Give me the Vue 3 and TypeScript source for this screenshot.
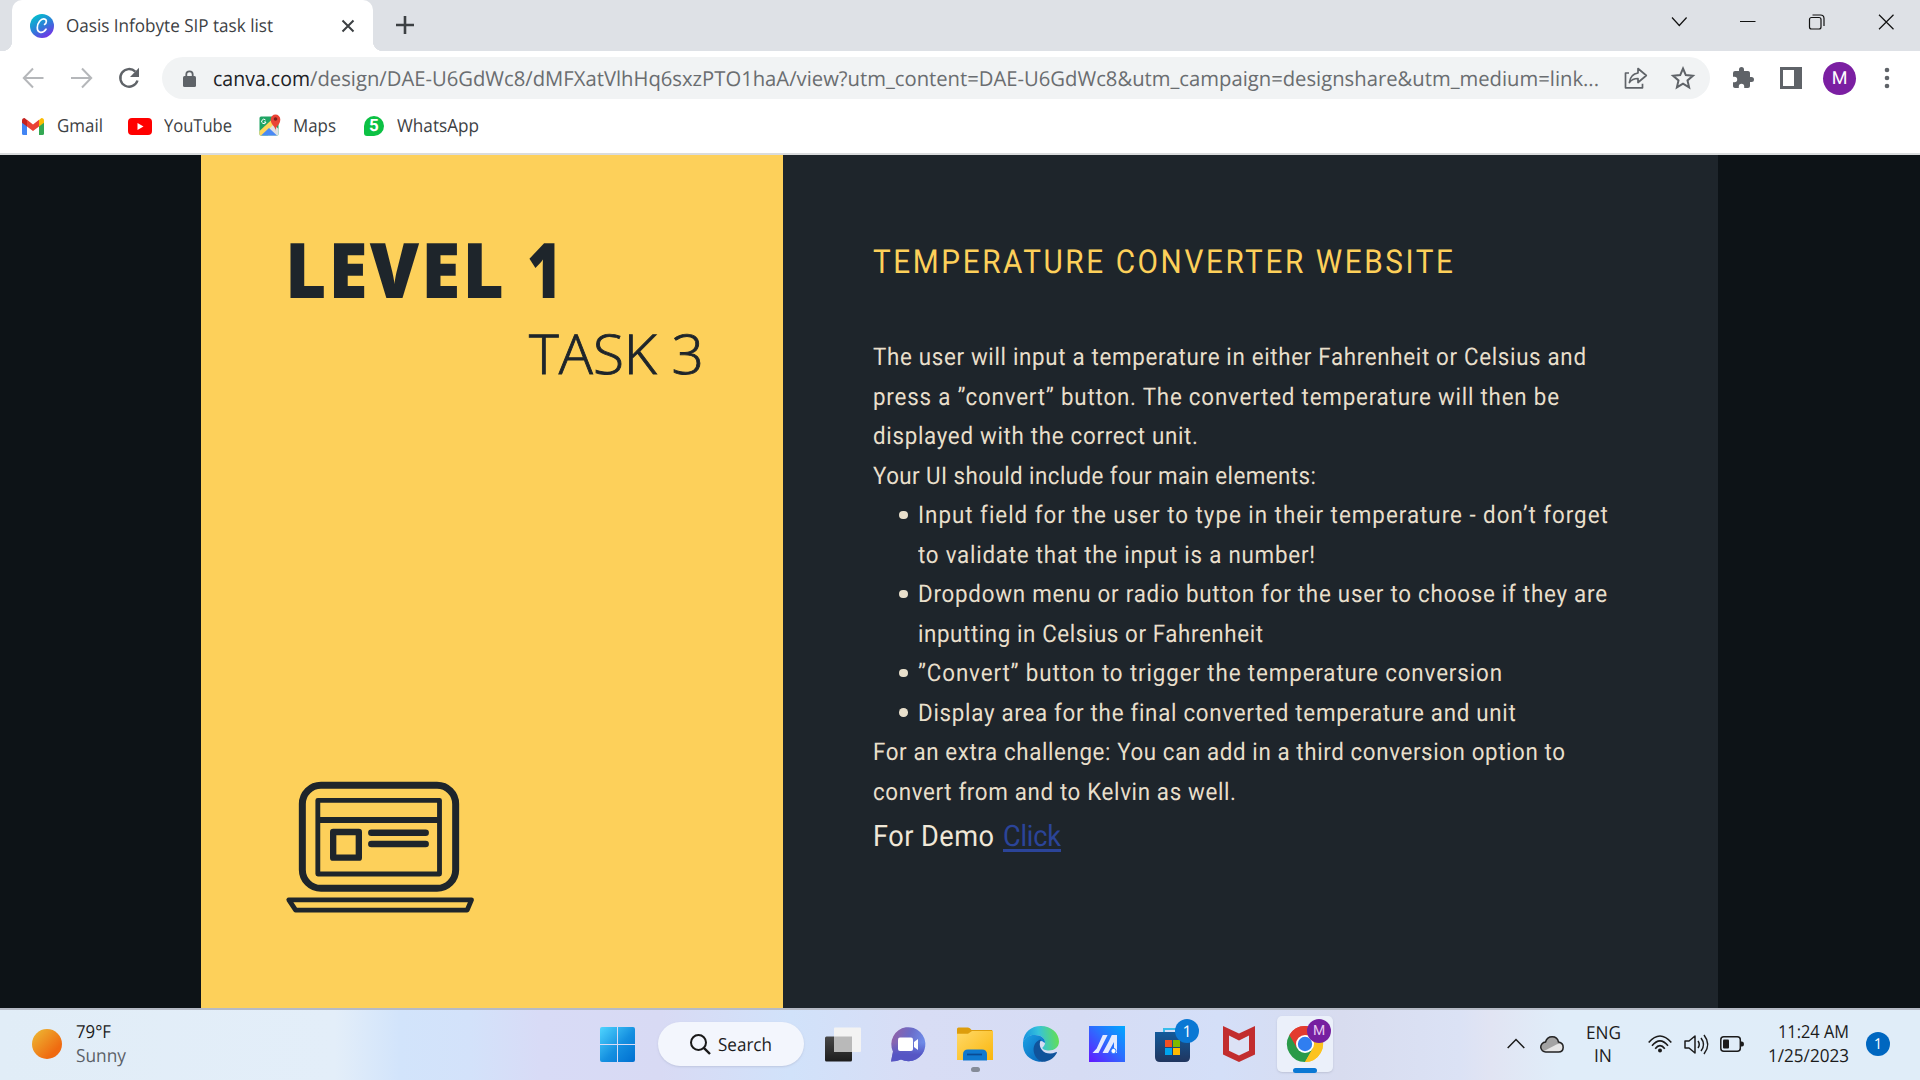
<script setup lang="ts">
import { defineComponent, h, onMounted, ref } from 'vue'

// Text set to an exact width: squeezed evenly, or tracked when a glyph scale is given.
const Fit = defineComponent({
  props: {
    text: { type: String, required: true },
    w: { type: Number, required: true },
    s: { type: Number, default: 0 }
  },
  setup(props) {
    const inner = ref<HTMLElement | null>(null)
    const scale = ref(1)
    const spacing = ref(0)
    onMounted(() => {
      if (!inner.value) return
      const natural = inner.value.getBoundingClientRect().width
      if (props.s) {
        scale.value = props.s
        spacing.value = (props.w / props.s - natural) / Math.max(1, props.text.length - 1)
      } else {
        scale.value = props.w / natural
      }
    })
    return () =>
      h('span', { style: { display: 'block', width: props.w + 'px', whiteSpace: 'pre' } }, [
        h('span', {
          ref: inner,
          style: {
            display: 'inline-block',
            transformOrigin: '0 50%',
            transform: `scaleX(${scale.value})`,
            letterSpacing: spacing.value + 'px'
          }
        }, props.text)
      ])
  }
})

interface Line { text: string; w: number; item?: boolean; bullet?: boolean }

const lines: Line[] = [
  { text: 'The user will input a temperature in either Fahrenheit or Celsius and', w: 713 },
  { text: 'press a ”convert” button. The converted temperature will then be', w: 686 },
  { text: 'displayed with the correct unit.', w: 325 },
  { text: 'Your UI should include four main elements:', w: 443 },
  { text: 'Input field for the user to type in their temperature - don’t forget', w: 689, item: true, bullet: true },
  { text: 'to validate that the input is a number!', w: 397, item: true },
  { text: 'Dropdown menu or radio button for the user to choose if they are', w: 689, item: true, bullet: true },
  { text: 'inputting in Celsius or Fahrenheit', w: 345, item: true },
  { text: '”Convert” button to trigger the temperature conversion', w: 584, item: true, bullet: true },
  { text: 'Display area for the final converted temperature and unit', w: 597, item: true, bullet: true },
  { text: 'For an extra challenge: You can add in a third conversion option to', w: 692 },
  { text: 'convert from and to Kelvin as well.', w: 363 }
]
</script>

<template>
  <div class="screen">
    <header class="tabstrip">
      <div class="tab">
        <svg class="favicon" viewBox="0 0 24 24">
          <defs>
            <linearGradient id="canva" x1="0.2" y1="0" x2="0.8" y2="1">
              <stop offset="0" stop-color="#00c4cc" /><stop offset=".5" stop-color="#2b7fd8" /><stop offset="1" stop-color="#7d2ae8" />
            </linearGradient>
          </defs>
          <circle cx="12" cy="12" r="12" fill="url(#canva)" />
          <path d="M14.6 10.4c1.9-.6 2.6-4.6.1-5.3C11 4.100 7.300 9 7.300 13.800c0 5.700 5.700 5.800 8.700 1.400" fill="none" stroke="#fff" stroke-width="1.7" stroke-linecap="round" />
        </svg>
        <Fit class="tabtitle" text="Oasis Infobyte SIP task list" :w="207" />
        <svg class="tabclose" viewBox="0 0 14 14"><path d="M1.500 1.500l11 11M12.500 1.500l-11 11" stroke="#3c4043" stroke-width="2" /></svg>
      </div>
      <svg class="newtab" viewBox="0 0 18 18"><path d="M9 0v18M0 9h18" stroke="#3c4043" stroke-width="2.600" /></svg>
      <svg class="winctl" viewBox="0 0 224 16" fill="none" stroke="#111" stroke-width="1.200">
        <path d="M1 3.500l7.300 8 7.300-8M69 7.500h15.500M208 .8l14.500 14.400M222.500.8L208 15.200" />
        <rect x="138.500" y="3.500" width="11.500" height="11.500" rx="2" />
        <path d="M141.500 1h8q3.500 0 3.500 3.500v7.500" />
      </svg>
    </header>

    <div class="toolbar">
      <svg class="nav" viewBox="0 0 120 24" fill="none" stroke-width="2">
        <path d="M21.500 12H2.500M11 2.500L1.800 12l9.200 9.500" stroke="#b5b7ba" />
        <path d="M49 12h19.500M60 2.500l9.200 9.500-9.200 9.500" stroke="#b5b7ba" />
        <path d="M113.300 5.600A8.800 8.800 0 1 0 115.500 14.500" stroke="#5f6368" stroke-width="2.400" />
        <path d="M117 1.800v9.200h-9z" fill="#5f6368" />
      </svg>
      <div class="omnibox">
        <svg class="lock" viewBox="0 0 13 17"><path d="M3.300 8V4.500a3.200 3.200 0 0 1 6.400 0V8" fill="none" stroke="#5f6368" stroke-width="1.800" /><rect y="6" width="13" height="11" rx="1.500" fill="#5f6368" /></svg>
        <Fit class="host" text="canva.com" :w="97" />
        <Fit class="path" text="/design/DAE-U6GdWc8/dMFXatVlhHq6sxzPTO1haA/view?utm_content=DAE-U6GdWc8&amp;utm_campaign=designshare&amp;utm_medium=link..." :w="1289" />
        <svg class="share" viewBox="0 0 24 22" fill="none" stroke="#5f6368" stroke-width="1.700"><path d="M5 6H1.500v14.800h17v-4M14 1.500l8.300 7-8.300 7V11.500c-4 0-6.500 1-8.600 4 .6-5 3.300-8.800 8.600-9.500z" stroke-linejoin="round" /></svg>
        <svg class="star" viewBox="0 0 24 24"><path d="M12 2.500l2.800 6.600 7.100.6-5.400 4.700 1.600 7L12 17.700l-6.100 3.700 1.600-7-5.400-4.700 7.100-.6z" fill="none" stroke="#5f6368" stroke-width="2" /></svg>
      </div>
      <svg class="puzzle" viewBox="1 1 22 22"><path fill="#5f6368" d="M20.500 11H19V7c0-1.100-.9-2-2-2h-4V3.500a2.500 2.500 0 0 0-5 0V5H4a2 2 0 0 0-2 2v3.800h1.500a2.700 2.700 0 0 1 0 5.400H2V20c0 1.100.9 2 2 2h3.800v-1.500a2.700 2.700 0 0 1 5.400 0V22H17a2 2 0 0 0 2-2v-4h1.500a2.500 2.500 0 0 0 0-5z" /></svg>
      <svg class="panel" viewBox="0 0 22 22"><path fill="#5f6368" fill-rule="evenodd" d="M0 0h22v22H0zM3 3v16h11V3z" /></svg>
      <div class="avatar">M</div>
      <svg class="dots" viewBox="0 0 6 22" fill="#5f6368"><circle cx="3" cy="3" r="2.300" /><circle cx="3" cy="11" r="2.300" /><circle cx="3" cy="19" r="2.300" /></svg>
    </div>

    <nav class="bookmarks">
      <svg class="gmail" viewBox="0 0 22 17">
        <path d="M0 2.500V15.500Q0 17 1.500 17H5V7z" fill="#4285f4" /><path d="M22 2.500V15.500Q22 17 20.500 17H17V7z" fill="#34a853" />
        <path d="M17 2v6.500l5-3.800V2.600Q22 0 19.500 0z" fill="#fbbc04" /><path d="M5 2v6.500L0 4.700V2.600Q0 0 2.500 0z" fill="#c5221f" />
        <path d="M5 8.500V1.800l6 4.600 6-4.600v6.700l-6 4.500z" fill="#ea4335" />
      </svg>
      <Fit class="b1" text="Gmail" :w="46" />
      <svg class="yt" viewBox="0 0 24 17"><rect width="24" height="17" rx="4" fill="#f00" /><path d="M9.500 5v7l6-3.500z" fill="#fff" /></svg>
      <Fit class="b2" text="YouTube" :w="68" />
      <svg class="maps" viewBox="0 0 22 23">
        <rect x=".5" y="2.500" width="19" height="19" rx="1.500" fill="#1fa463" />
        <path d="M8 14l6-5 5.500 6V20q0 1.500-1.500 1.500H9z" fill="#dfe1e4" />
        <path d="M.5 17L14 4.500l2.500 4-13 13H2q-1.500 0-1.500-1.500z" fill="#ffd65b" /><path d="M2 21.500l8-7.500 8 7.500z" fill="#4989f5" />
        <path d="M6.500 6A2.200 2.200 0 1 0 7 8H5" fill="none" stroke="#fff" stroke-width="1" />
        <path d="M16.500 17c0-5-4.800-6-4.800-11.500a4.800 5 0 0 1 9.600 0C21.300 11 16.500 12 16.500 17z" fill="#ea4335" /><circle cx="16.500" cy="5" r="1.800" fill="#7e1f1a" />
      </svg>
      <Fit class="b3" text="Maps" :w="43" />
      <div class="wa">5</div>
      <Fit class="b4" text="WhatsApp" :w="82" />
    </nav>

    <main class="page">
      <section class="cover">
        <div class="level"><Fit text="LEVEL" :w="219" :s="0.93" /><Fit class="one" text="1" :w="35" /></div>
        <Fit class="task" text="TASK 3" :w="175" />
        <svg class="laptop" viewBox="138 90 570 402" fill="none" stroke="#1e252b" stroke-linejoin="round">
          <rect x="187" y="106" width="460" height="309" rx="56" stroke-width="21" />
          <rect x="233.500" y="151" width="365" height="221" stroke-width="14.500" />
          <path d="M234 210h364" stroke-width="18" />
          <rect x="279.500" y="246" width="77" height="77" stroke-width="19" />
          <path d="M394 248.500h163M394 282h163" stroke-width="19.500" stroke-linecap="round" />
          <path d="M146.500 449.500h548l-13 31H167z" stroke-width="14.500" />
        </svg>
      </section>
      <section class="brief">
        <h1><Fit text="TEMPERATURE CONVERTER WEBSITE" :w="580" :s="0.9" /></h1>
        <div v-for="l in lines" :key="l.text" class="line" :class="{ item: l.item }">
          <i v-if="l.item" class="bullet" :class="{ hidden: !l.bullet }"></i>
          <Fit :text="l.text" :w="l.w" :s="0.92" />
        </div>
        <div class="demo"><Fit text="For Demo" :w="121" :s="0.92" /><a><Fit text="Click" :w="58" :s="0.92" /></a></div>
      </section>
    </main>

    <footer class="taskbar">
      <div class="sun"></div>
      <div class="weather"><Fit text="79°F" :w="35" /><Fit class="muted" text="Sunny" :w="50" /></div>
      <svg class="start" viewBox="0 0 35 35">
        <defs><linearGradient id="win" x1="0" y1="0" x2="1" y2="1" gradientUnits="objectBoundingBox"><stop offset="0" stop-color="#4fd5ff" /><stop offset=".55" stop-color="#148fe0" /><stop offset="1" stop-color="#006fd0" /></linearGradient></defs>
        <path d="M2 0h15v17H0V2q0-2 2-2zM18 0h15q2 0 2 2v15H18zM0 18h17v17H2q-2 0-2-2zM18 18h17v15q0 2-2 2H18z" fill="url(#win)" />
      </svg>
      <div class="search">
        <svg viewBox="0 0 21 21" fill="none" stroke="#191919" stroke-width="2"><circle cx="8.500" cy="8.500" r="7.500" /><path d="M13.800 13.800l6.200 6.200" stroke-width="2.400" /></svg>
        <Fit text="Search" :w="54" />
      </div>
      <svg class="view" viewBox="0 0 36 35">
        <defs><linearGradient id="dark" x1="0" y1="0" x2="0" y2="1"><stop offset="0" stop-color="#484848" /><stop offset="1" stop-color="#1d1d1d" /></linearGradient></defs>
        <rect y="9.500" width="27" height="25" rx="1.500" fill="url(#dark)" /><rect x="9" y=".5" width="27" height="24.500" rx="1" fill="#f3f3f3" /><path d="M9 9.500h18V25H9z" fill="#b9b9b9" />
      </svg>
      <svg class="chat" viewBox="0 0 34 35">
        <defs><linearGradient id="cht" x1=".1" y1=".2" x2=".9" y2=".5"><stop offset="0" stop-color="#8d62ab" /><stop offset=".5" stop-color="#6a6cc8" /><stop offset="1" stop-color="#6e8be8" /></linearGradient>
        <linearGradient id="chb" x1="0" y1="0" x2="0" y2="1"><stop offset=".45" stop-color="#5656c4" stop-opacity="0" /><stop offset=".8" stop-color="#5656c4" /></linearGradient></defs>
        <path d="M0 34.500l2-10a17 17 0 1 1 8 8q-4 2-10 2z" fill="url(#cht)" /><path d="M0 34.500l2-10a17 17 0 1 1 8 8q-4 2-10 2z" fill="url(#chb)" />
        <rect x="7" y="10.500" width="15" height="13.500" rx="2" fill="#fff" /><path d="M23 15l4-3v11l-4-3z" fill="#fff" />
      </svg>
      <div class="foldercell">
        <svg viewBox="0 0 36 34">
          <defs><linearGradient id="fld" x1="0" y1="0" x2="1" y2="1"><stop offset="0" stop-color="#ffd968" /><stop offset="1" stop-color="#fab60c" /></linearGradient></defs>
          <path d="M1.500.5H11q2 0 3.500 2.500H35L36 5v5H0V2Q0 .5 1.500.5z" fill="#dd9d0c" /><path d="M0 6.800h11l4-2.800h21v29H0z" fill="url(#fld)" />
          <path d="M6 33.500v-6q0-5 5-5h14q5 0 5 5v6z" fill="#0f79cf" /><path d="M10 27.500h15" stroke="#0a4b93" stroke-width="1.700" />
        </svg>
        <i></i>
      </div>
      <svg class="edge" viewBox="0 0 36 36">
        <defs>
          <linearGradient id="e1" x1="0" y1=".5" x2="1" y2=".4"><stop offset="0" stop-color="#1590df" /><stop offset=".45" stop-color="#35c2dc" /><stop offset="1" stop-color="#66e04f" /></linearGradient>
          <linearGradient id="e2" x1="0" y1="0" x2="1" y2="1"><stop offset="0" stop-color="#1ca1e5" /><stop offset="1" stop-color="#0662b7" /></linearGradient>
        </defs>
        <path d="M0 16C1 6 8 0 18 0c10 0 18 7 18 15.500 0 6-5 9-10 9-4 0-6.500-1.200-6.500-2.500s2.500-1.800 2.500-5.500c0-4-4-7.500-10-7.500C6 9 2 12 0 16z" fill="url(#e1)" />
        <path d="M0 16C2 11 7 8.500 12 9c6 0 10 3.500 10 7 0 1-.5 1-1 .5-7-6-13 9 0 18q-2 1.500-5 1.200C7 34.500-1 28 0 16z" fill="url(#e2)" />
        <path d="M18 13.500C8 16 8 31 19 35.800 26 36 31 32 33.800 27c.4-.8-.4-1.200-1-.8-5 2.500-11 1.500-14-2.500-2.500-3-2.500-7-.8-10.200z" fill="#10539b" />
      </svg>
      <svg class="asus" viewBox="0 0 36 36">
        <defs><linearGradient id="ma" x1="0" y1="1" x2="1" y2="0"><stop offset="0" stop-color="#6417ff" /><stop offset=".55" stop-color="#2a70ff" /><stop offset="1" stop-color="#00a9ff" /></linearGradient></defs>
        <path d="M0 0h36v36H0z" fill="url(#ma)" /><path d="M3.500 27l4.200-4.500L13.800 9h4.800L9.500 27zM13.500 27l6.500-12 2.800-6H28V27h-3V16l-6 11z" fill="#e4eaff" /><circle cx="24.500" cy="25" r="2.600" fill="#fff" stroke="#287bff" />
      </svg>
      <div class="store">
        <svg viewBox="0 0 35 35">
          <defs><linearGradient id="st" x1="0" y1="0" x2="0" y2="1"><stop offset="0" stop-color="#125a9b" /><stop offset="1" stop-color="#20355e" /></linearGradient></defs>
          <path d="M9 7V2h16v5" fill="none" stroke="#39bdeb" stroke-width="2" /><path d="M0 5h35v25q0 5-5 5H5q-5 0-5-5z" fill="url(#st)" />
          <path d="M10 13h7v7h-7z" fill="#f25022" /><path d="M18 13h7v7h-7z" fill="#7fba00" /><path d="M10 21h7v7h-7z" fill="#00a4ef" /><path d="M18 21h7v7h-7z" fill="#ffb900" />
        </svg>
        <b class="badge">1</b>
      </div>
      <svg class="mcafee" viewBox="0 0 32 36"><path d="M0 0l16 7.500L32 0v28.500L16 36 0 28.500z" fill="#c22d2e" /><path d="M6 9.500l10 5 10-5v15.300L16 29.500 6 24.800z" fill="#dce2f5" /></svg>
      <div class="chrome">
        <svg viewBox="0 0 36 36">
          <path d="M18 18L2.410 9A18 18 0 0 1 33.590 9z" fill="#e33b2e" /><path d="M18 18L33.590 9A18 18 0 0 1 18 36z" fill="#fcc31e" /><path d="M18 18L18 36A18 18 0 0 1 2.410 9z" fill="#2a9a49" />
          <path d="M10.200 22.500L2.410 9 18 9zM25.800 22.500L18 36l-7.800-13.500z" fill="#2a9a49" /><path d="M25.800 22.500L18 36q10 0 15.600-9 4.800-9 0-18H18z" fill="#fcc31e" /><path d="M18 9h15.600Q28 0 18 0T2.400 9l7.800 13.500z" fill="#e33b2e" />
          <circle cx="18" cy="18" r="9" fill="#fff" /><circle cx="18" cy="18" r="7.200" fill="#307ef0" />
        </svg>
        <b class="badge purple">M</b><i></i>
      </div>
      <svg class="up" viewBox="0 0 18 11"><path d="M.7 10L9 1.500l8.300 8.500" fill="none" stroke="#1b1b1b" stroke-width="1.500" /></svg>
      <svg class="cloud" viewBox="0 0 24 17">
        <path d="M6 16a5 5 0 0 1-.5-10C7.500-1 17-1 18.500 6 25 7 24.500 16 18.500 16z" fill="#a3a3a3" /><path d="M4 15L16.500 8.500q5-2.500 6.500 3-1 4.500-4.500 4.500H6z" fill="#e5e5e5" />
        <path d="M6 16a5 5 0 0 1-.5-10C7.500-1 17-1 18.500 6 25 7 24.500 16 18.500 16z" fill="none" stroke="#222" stroke-width="1.500" />
      </svg>
      <div class="lang"><Fit text="ENG" :w="35" /><Fit text="IN" :w="18" /></div>
      <svg class="wifi" viewBox="0 0 24 18" fill="none" stroke="#1b1b1b" stroke-width="1.600"><path d="M.7 7.500Q12-5.500 23.300 7.500M4 10.800Q12 1 20 10.800M7.200 13.700Q12 7.500 16.800 13.700" /><circle cx="12" cy="15.500" r="2" fill="#1b1b1b" stroke="none" /></svg>
      <svg class="sound" viewBox="0 0 24 21" fill="none" stroke="#1b1b1b" stroke-width="1.500"><path d="M1 7h4l6-5v17l-6-5H1zM14 7q2.500 3.500 0 7M17 4q5 6.500 0 13M20 1q7.500 9.500 0 19" stroke-linejoin="round" /></svg>
      <svg class="battery" viewBox="0 0 24 16"><rect x=".8" y=".8" width="19.500" height="14.400" rx="3" fill="none" stroke="#1b1b1b" stroke-width="1.500" /><rect x="3" y="3.500" width="6" height="9" rx="1" fill="#1b1b1b" /><path d="M21 5.500h1q2 0 2 2.500t-2 2.500h-1z" fill="#1b1b1b" /></svg>
      <div class="clock"><Fit text="11:24 AM" :w="71" /><Fit text="1/25/2023" :w="81" /></div>
      <b class="count">1</b>
    </footer>
  </div>
</template>

<style>
body { margin: 0; overflow: hidden; }
</style>

<style scoped>
.screen { width: 1920px; height: 1080px; display: flex; flex-direction: column; overflow: hidden; background: #fff; font-family: "Open Sans", "Noto Sans", sans-serif; font-size: 18px; color: #3c4043; text-rendering: geometricPrecision; }
.screen * { box-sizing: border-box; }
svg { display: block; flex: none; overflow: visible; }
.tabstrip { height: 51px; flex: none; display: flex; background: #dee1e6; }
.tab { width: 361px; height: 51px; margin-left: 12px; background: #fff; border-radius: 10px 10px 0 0; display: flex; align-items: center; position: relative; }
.tab::before, .tab::after { content: ""; position: absolute; bottom: 0; width: 10px; height: 10px; }
.tab::before { left: -10px; background: radial-gradient(circle at 0 0, transparent 10px, #fff 10.5px); }
.tab::after { right: -10px; background: radial-gradient(circle at 100% 0, transparent 10px, #fff 10.5px); }
.favicon { width: 24px; height: 24px; margin-left: 18px; }
.tabtitle { margin-left: 12px; }
.tabclose { width: 14px; height: 14px; margin-left: 68px; }
.newtab { width: 18px; height: 18px; margin: 16px 0 0 23px; }
.winctl { width: 224px; height: 16px; margin: 13.500px 0 0 1256.500px; }
.toolbar { height: 56px; flex: none; display: flex; align-items: center; }
.nav { width: 120px; height: 24px; margin: 0 20px 2px 22px; }
.omnibox { width: 1548px; height: 42px; border-radius: 21px; background: #f1f3f4; display: flex; align-items: center; font-size: 20.500px; margin-bottom: 2px; }
.lock { width: 13px; height: 17px; margin: 0 17px 0 21px; }
.host { color: #202124; padding-top: 1.500px; }
.path { color: #6a6d70; padding-top: 1.500px; }
.share { width: 24px; height: 22px; margin-left: 25px; }
.star { width: 24px; height: 24px; margin-left: 23px; }
.puzzle { width: 22px; height: 22px; margin: 0 0 2px 22px; }
.panel { width: 22px; height: 22px; margin: 0 0 2px 26px; }
.avatar { width: 33px; height: 33px; margin: 0 0 1px 21px; border-radius: 50%; background: #7b1fa2; color: #fff; font: 18px/33px Roboto, sans-serif; text-align: center; }
.dots { width: 6px; height: 22px; margin: 0 0 2px 28px; }
.bookmarks { height: 48px; flex: none; display: flex; align-items: center; padding: 0 0 8px 22px; border-bottom: 2px solid #dadcdd; }
.gmail { width: 22px; height: 17px; }
.b1 { margin-left: 13px; }
.yt { width: 24px; height: 17px; margin: 0 0 0 25px; }
.b2 { margin-left: 12px; }
.maps { width: 22px; height: 23px; margin: 0 0 2px 27px; }
.b3 { margin-left: 12px; }
.wa { width: 20px; height: 20px; margin: 0 0 0 28px; border-radius: 50% 50% 50% 3px; background: #0cc144; color: #fff; font: bold 17px/20px Roboto, sans-serif; text-align: center; }
.b4 { margin-left: 13px; }
.page { height: 853px; flex: none; display: flex; padding-left: 201px; background: #0d1317; }
.cover { width: 582px; background: #fdd05a; color: #1e252b; padding: 74px 0 0 84px; }
.level { display: flex; gap: 23px; font-size: 76.600px; line-height: 80px; font-weight: 800; height: 80px; }
.task { margin: 15px 0 0 244px; font-size: 55px; line-height: 60px; height: 60px; font-weight: 300; -webkit-text-stroke: 0.9px #1e252b; }
.laptop { width: 190px; height: 134px; margin-top: 396px; margin-left: 1px; }
.brief { width: 935px; background: #1e252b; padding: 88px 0 0 90px; font-family: Roboto, sans-serif; font-size: 24.300px; color: #e8dfcb; }
h1 { margin: 0 0 54px; font-size: 33px; line-height: 40px; height: 40px; font-weight: 400; color: #fdd05a; }
.line { height: 39.550px; line-height: 39.550px; display: flex; align-items: center; }
.item { padding-left: 26px; }
.bullet { width: 8.500px; height: 8.500px; border-radius: 50%; background: currentColor; margin-right: 10px; }
.hidden { visibility: hidden; }
.demo { display: flex; gap: 9px; font-size: 29.500px; height: 49px; line-height: 49px; margin-top: 1px; color: #f0e8d8; }
.demo a { color: #2b4499; position: relative; height: 49px; }
.demo a::after { content: ""; position: absolute; left: 0; right: 0; top: 36px; height: 3px; background: #2b4499; }
.taskbar { height: 72px; flex: none; border-top: 2px solid #b5bac5; display: flex; align-items: center; padding-bottom: 2px; color: #1b1b1b; background: linear-gradient(90deg, #e1edf7 0, #e3eef9 335px, #d2e4fb 400px, #d3e2fa 470px, #d8dbf6 540px, #d8daf4 660px, #d1e2fa 790px, #d8ddf5 920px, #d6dcf4 1080px, #d4dff8 1220px, #d8dcef 1340px, #dbe2f5 1460px, #e1e4f3 1490px, #e0edf9 1560px, #e0edf8 1920px); }
.sun { width: 30px; height: 30px; margin-left: 32px; border-radius: 50%; background: linear-gradient(135deg, #edbd36, #ef6a10 75%); }
.weather, .lang, .clock { display: flex; flex-direction: column; line-height: 24px; flex: none; }
.weather { margin-left: 14px; width: 50px; }
.muted { color: #5a6067; }
.start { width: 35px; height: 35px; margin-left: 474px; }
.search { width: 146px; height: 44px; border-radius: 22px; margin-left: 23px; background: #f3f6fd; box-shadow: 0 1px 2px #aab2cc88; display: flex; align-items: center; padding: 1px 0 0 32px; gap: 7px; }
.search svg { width: 21px; height: 21px; }
.view { width: 36px; height: 35px; margin-left: 21px; }
.chat { width: 34px; height: 35px; margin-left: 30px; }
.foldercell { width: 36px; height: 34px; margin-left: 32px; position: relative; }
.foldercell i { position: absolute; left: 14px; top: 40px; width: 9px; height: 5px; border-radius: 3px; background: #858b98; }
.edge { width: 36px; height: 36px; margin-left: 30px; }
.asus { width: 36px; height: 36px; margin-left: 30px; }
.store { width: 35px; height: 35px; margin-left: 30px; position: relative; }
.badge { position: absolute; left: 20px; top: -8px; width: 24px; height: 24px; border-radius: 50%; background: #0a78d4; color: #fff; font-size: 16px; line-height: 24px; font-weight: 400; text-align: center; }
.mcafee { width: 32px; height: 36px; margin-left: 33px; }
.chrome { width: 56px; height: 56px; margin-left: 22px; position: relative; border-radius: 5px; background: #ebf0fa; box-shadow: 0 1px 2px #a6adc088; padding: 10px; }
.chrome svg { width: 36px; height: 36px; }
.purple { left: 30px; top: 3px; background: #761fa0; color: #e6c8f0; font-family: Roboto, sans-serif; font-size: 14px; }
.chrome i { position: absolute; left: 16px; bottom: -1px; width: 24px; height: 5px; border-radius: 3px; background: #0a78d4; }
.up { width: 18px; height: 11px; margin: 0 0 2px 174px; }
.cloud { width: 24px; height: 17px; margin-left: 15px; }
.lang { width: 35px; margin: 2px 0 0 21.500px; align-items: center; line-height: 23px; }
.wifi { width: 24px; height: 18px; margin-left: 27.500px; }
.sound { width: 24px; height: 21px; margin-left: 12px; }
.battery { width: 24px; height: 16px; margin-left: 12px; }
.clock { width: 81px; margin-left: 23.500px; align-items: flex-end; }
.count { width: 24px; height: 24px; margin-left: 17.500px; border-radius: 50%; background: #0067c0; color: #fff; font-size: 15px; line-height: 24px; font-weight: 400; text-align: center; }
</style>
